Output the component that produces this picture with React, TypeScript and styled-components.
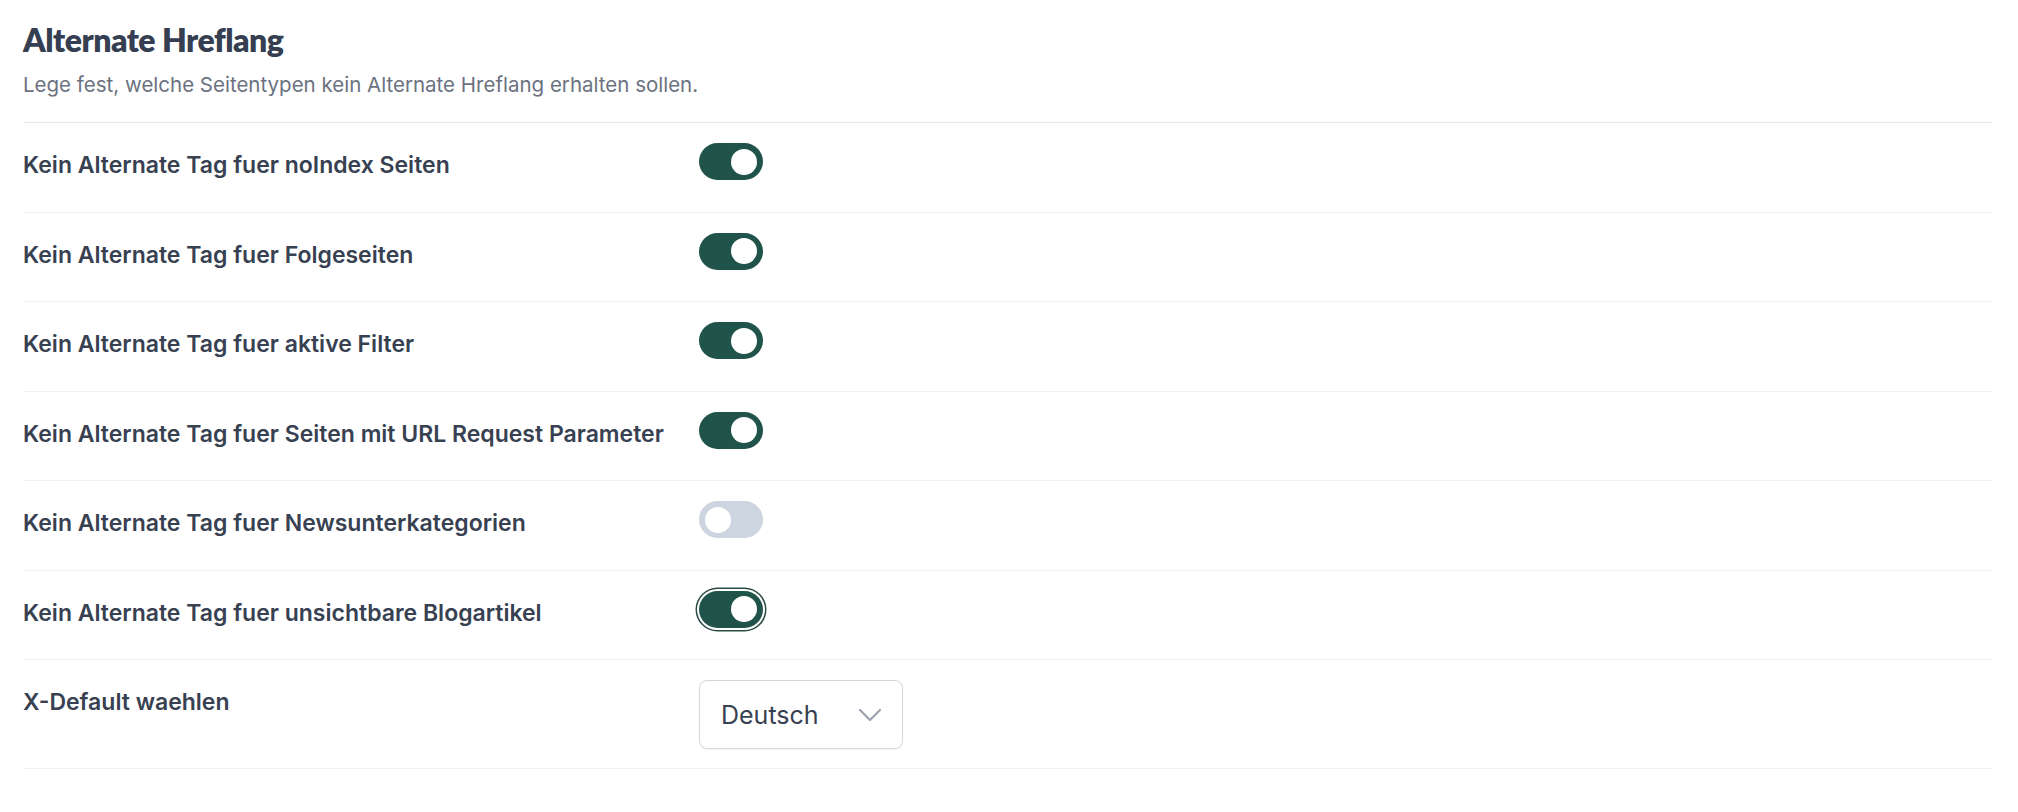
import React, { useState } from "react";
import styled, { createGlobalStyle } from "styled-components";

const GlobalStyle = createGlobalStyle`
  html, body { margin: 0; padding: 0; background: #ffffff; }
  body { font-family: "Inter", "Noto Sans", sans-serif; -webkit-font-smoothing: antialiased; }
  * { box-sizing: border-box; }
`;

const Page = styled.div`
  padding: 0 26px 0 23px;
  width: 100%;
`;

const Header = styled.header`
  padding-top: 20px;
  padding-bottom: 23px;
  border-bottom: 1px solid #e5e7eb;
`;

const Title = styled.h2`
  margin: 0;
  font-family: "Lato", "Noto Sans", sans-serif;
  font-weight: 800;
  font-size: 32px;
  line-height: 40px;
  color: #353f51;
  letter-spacing: -0.5px;
`;

const Subtitle = styled.p`
  margin: 11px 0 0;
  font-family: "Inter", "Noto Sans", sans-serif;
  font-size: 20.5px;
  line-height: 28px;
  color: #6b7280;
`;

const Row = styled.div<{ $last?: boolean }>`
  display: grid;
  grid-template-columns: 676px 1fr;
  align-items: start;
  padding: 20px 0 ${(p) => (p.$last ? "19px" : "30.5px")};
  border-bottom: 1px solid #f1f2f4;
`;

const Label = styled.span`
  padding-top: 6px;
  font-family: "Inter", "Noto Sans", sans-serif;
  font-weight: 600;
  font-size: 23px;
  line-height: 32px;
  color: #374151;
`;

const Track = styled.button<{ $on: boolean; $focus?: boolean }>`
  position: relative;
  width: 64px;
  height: 37px;
  border: none;
  border-radius: 999px;
  cursor: pointer;
  background: ${(p) => (p.$on ? "#20544a" : "#cdd5e0")};
  box-shadow: ${(p) => (p.$focus ? "0 0 0 2px #ffffff, 0 0 0 3.5px #2b4b45" : "none")};
  display: flex;
  align-items: center;
  justify-content: ${(p) => (p.$on ? "flex-end" : "flex-start")};
  padding: 0 6px;
`;

const Knob = styled.span`
  width: 26px;
  height: 26px;
  border-radius: 50%;
  background: #ffffff;
  display: block;
`;

const SelectBox = styled.div`
  width: 204px;
  height: 69px;
  border: 1px solid #d4d7de;
  border-radius: 8px;
  background: #ffffff;
  display: flex;
  align-items: center;
  justify-content: space-between;
  padding: 0 20px 0 21px;
  box-shadow: 0 1px 2px rgba(16, 24, 40, 0.04);
`;

const SelectText = styled.span`
  font-family: "Inter", "Noto Sans", sans-serif;
  font-size: 25px;
  color: #374151;
`;

const Chevron = () => (
  <svg width="24" height="14" viewBox="0 0 24 14" fill="none">
    <polyline points="2,2 12,12 22,2" stroke="#9ca3af" strokeWidth="2.2" strokeLinecap="round" strokeLinejoin="round" />
  </svg>
);

type Item = { label: string; on: boolean; focus?: boolean };

const items: Item[] = [
  { label: "Kein Alternate Tag fuer noIndex Seiten", on: true },
  { label: "Kein Alternate Tag fuer Folgeseiten", on: true },
  { label: "Kein Alternate Tag fuer aktive Filter", on: true },
  { label: "Kein Alternate Tag fuer Seiten mit URL Request Parameter", on: true },
  { label: "Kein Alternate Tag fuer Newsunterkategorien", on: false },
  { label: "Kein Alternate Tag fuer unsichtbare Blogartikel", on: true, focus: true },
];

const Toggle: React.FC<{ initial: boolean; focus?: boolean }> = ({ initial, focus }) => {
  const [on, setOn] = useState(initial);
  return (
    <Track role="switch" aria-checked={on} $on={on} $focus={focus} onClick={() => setOn(!on)}>
      <Knob />
    </Track>
  );
};

export default function App() {
  return (
    <>
      <GlobalStyle />
      <Page>
        <Header>
          <Title>Alternate Hreflang</Title>
          <Subtitle>Lege fest, welche Seitentypen kein Alternate Hreflang erhalten sollen.</Subtitle>
        </Header>
        {items.map((it) => (
          <Row key={it.label}>
            <Label>{it.label}</Label>
            <div>
              <Toggle initial={it.on} focus={it.focus} />
            </div>
          </Row>
        ))}
        <Row $last>
          <Label>X-Default waehlen</Label>
          <div>
            <SelectBox>
              <SelectText>Deutsch</SelectText>
              <Chevron />
            </SelectBox>
          </div>
        </Row>
      </Page>
    </>
  );
}
